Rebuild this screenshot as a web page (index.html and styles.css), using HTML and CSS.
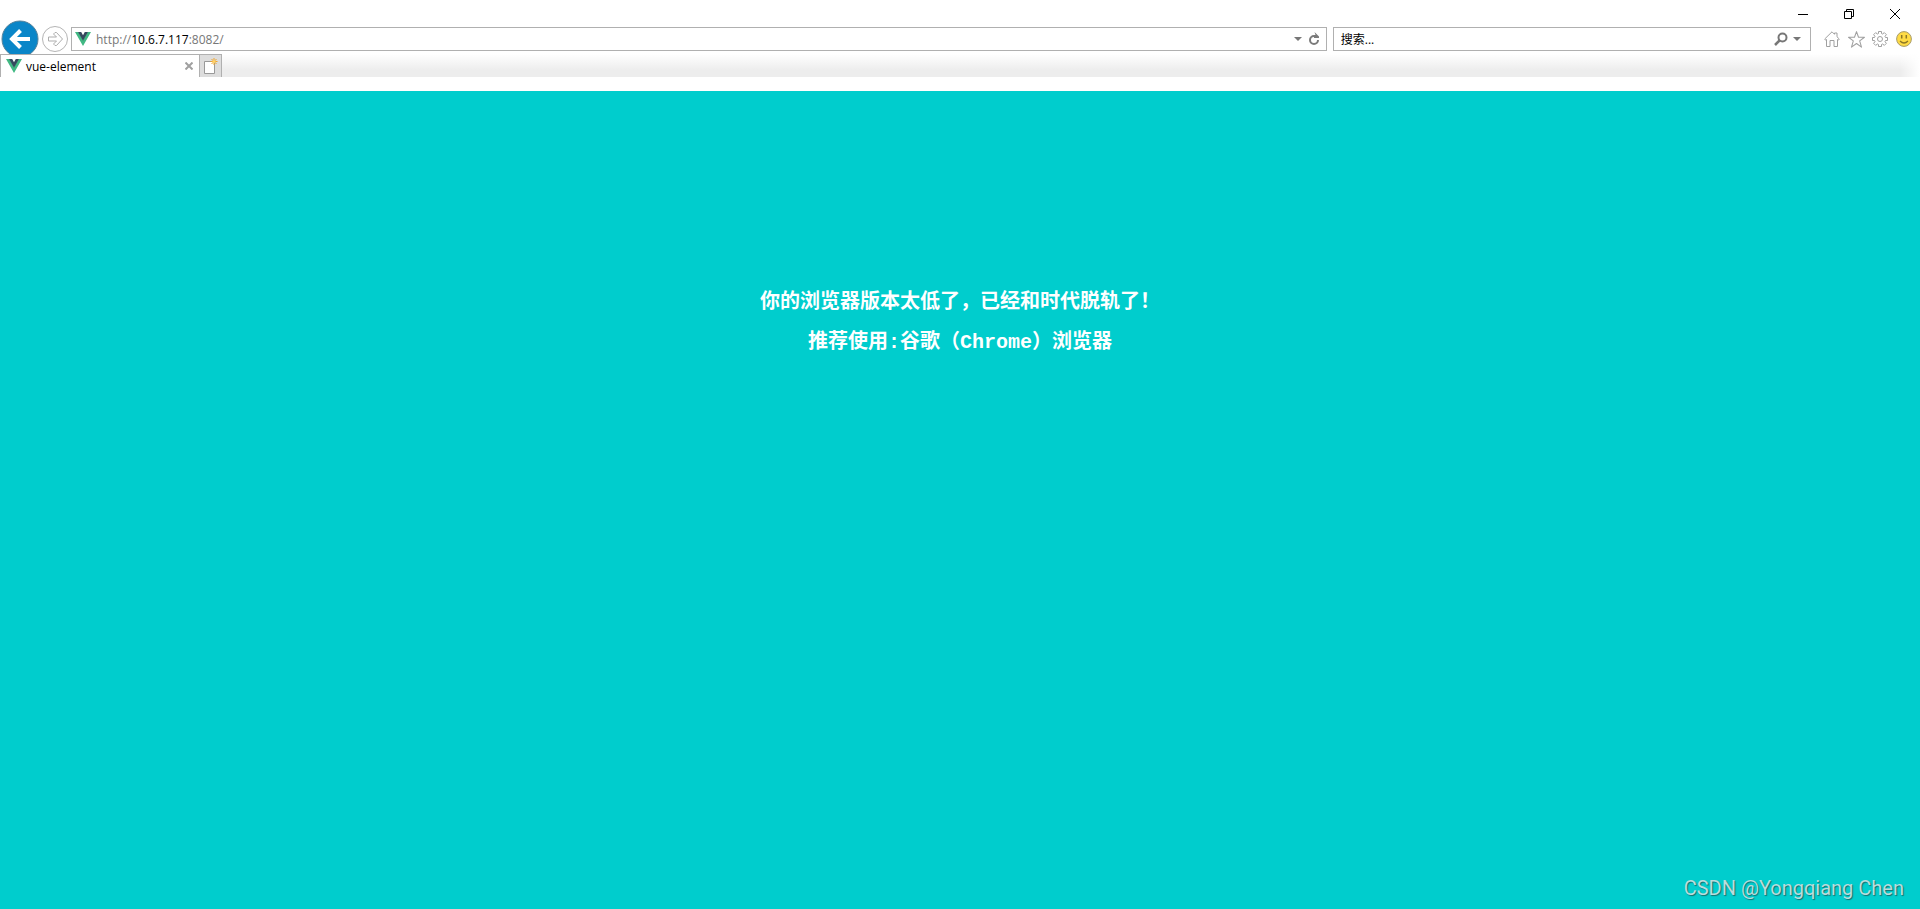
FILE: index.html
```html
<!DOCTYPE html>
<html lang="zh-CN">
<head>
<meta charset="utf-8">
<title>vue-element</title>
<link rel="stylesheet" href="styles.css">
</head>
<body>
<svg class="defs" aria-hidden="true">
  <symbol id="vue" viewBox="0 0 16 14">
    <path d="M0 0h3.4L8 8l4.600-8H16L8 14z" fill="#41b883"/>
    <path d="M3 0h3.200L8 3.200 9.800 0H13L8 8.800z" fill="#35495e"/>
  </symbol>
</svg>
<header class="browser">
  <div class="titlebar">
    <button class="win-btn" aria-label="最小化"><svg width="12" height="12" viewBox="0 0 12 12"><path d="M1 6.500h10" class="win-line"/></svg></button>
    <button class="win-btn" aria-label="还原"><svg width="12" height="12" viewBox="0 0 12 12"><path d="M1.500 3.500h7v7h-7zM3.500 3V1.500h7v7H9" class="win-line"/></svg></button>
    <button class="win-btn" aria-label="关闭"><svg width="12" height="12" viewBox="0 0 12 12"><path d="M1 1l10 10M11 1L1 11" class="win-line"/></svg></button>
  </div>
  <div class="navbar">
    <button class="back" aria-label="后退"><svg width="38" height="38" viewBox="0 0 38 38"><circle cx="19" cy="19" r="18" fill="#0a86c8" stroke="#56839b"/><path d="M29 19H12M19.500 10.500L11 19l8.500 8.500" fill="none" stroke="#fff" stroke-width="4"/></svg></button>
    <button class="forward" aria-label="前进"><svg width="26" height="26" viewBox="0 0 26 26"><circle cx="13" cy="13" r="12.500" fill="#fff" stroke="#b4b4b4"/><path d="M6.500 11h8L11.500 8l1.500-1.500h1.500L20.500 13l-6 6.500H13L11.500 18l3-3h-8z" fill="none" stroke="#adadad" stroke-linejoin="round"/></svg></button>
    <div class="field address">
      <svg width="16" height="14"><use href="#vue"/></svg>
      <div class="url" role="textbox" contenteditable="true" spellcheck="false" aria-label="地址">http://<span class="host">10.6.7.117</span>:8082/</div>
      <button class="small-btn" aria-label="显示地址列表"><svg width="8" height="4" viewBox="0 0 8 4"><path d="M0 0h8L4 4z" fill="#777"/></svg></button>
      <button class="small-btn" aria-label="刷新"><svg width="12" height="14" viewBox="0 0 12 14"><path d="M9 4H6A4 4 0 1 0 10 8" fill="none" stroke="#7b7b7b" stroke-width="2"/><path d="M6.500 0L11 4.500V6H6V4.500h2z" fill="#7b7b7b"/></svg></button>
    </div>
    <div class="field search">
      <input class="search-input" type="text" placeholder="搜索..." aria-label="搜索">
      <button class="small-btn" aria-label="搜索"><svg width="14" height="14" viewBox="0 0 14 14"><circle cx="8.500" cy="5.500" r="4" fill="none" stroke="#777" stroke-width="2"/><path d="M5.500 8.500L1 13" stroke="#777" stroke-width="2.500"/></svg></button>
      <button class="small-btn" aria-label="搜索选项"><svg width="8" height="4" viewBox="0 0 8 4"><path d="M0 0h8L4 4z" fill="#777"/></svg></button>
    </div>
    <div class="tools">
      <button class="tool" aria-label="主页"><svg width="16" height="16" viewBox="0 0 16 16"><path d="M.7 8L8 .8l2.500 2.500V2h2.500v3.800L15.300 8l-1 1.200L13.500 8.500v7h-3.500V9.500H6v6H2.500v-7l-.8.700z" class="tool-line"/></svg></button>
      <button class="tool" aria-label="收藏夹"><svg width="17" height="17" viewBox="0 0 16 16"><path d="M8 .6l1.900 5.300h5.600L11 9.300l1.700 5.900L8 11.800l-4.700 3.400L5 9.300.5 5.900h5.600z" class="tool-line"/></svg></button>
      <button class="tool" aria-label="工具"><svg width="16" height="16" viewBox="0 0 16 16"><path d="M6.500.5h3v2l1.200.500L12.300 1.600l2.100 2.100L13 5.300l.5 1.200h2v3h-2L13 10.700l1.400 1.600-2.100 2.100-1.600-1.400-1.200.5v2h-3v-2L5.300 13l-1.600 1.400-2.100-2.100L3 10.700 2.500 9.500h-2v-3h2L3 5.300 1.600 3.700l2.100-2.100L5.300 3l1.200-.5z" class="tool-line"/><circle cx="8" cy="8" r="2.500" class="tool-line"/></svg></button>
      <button class="tool" aria-label="反馈"><svg width="16" height="16" viewBox="0 0 16 16"><circle cx="8" cy="8" r="7.400" fill="#ffdb45" stroke="#a89c6c"/><path d="M5.700 4v3.500M10.300 4v3.500" stroke="#8c7726" stroke-width="1.500"/><path d="M4 10q4 4 8 0" fill="none" stroke="#8c7726" stroke-width="1.200"/></svg></button>
    </div>
  </div>
  <div class="tabs">
    <div class="tab">
      <svg width="16" height="14"><use href="#vue"/></svg>
      <span class="tab-title">vue-element</span>
      <button class="small-btn" aria-label="关闭选项卡"><svg width="8" height="8" viewBox="0 0 8 8"><path d="M.5.5l7 7M7.500.5l-7 7" stroke="#a0a0a0" stroke-width="2"/></svg></button>
    </div>
    <button class="new-tab" aria-label="新建选项卡"><svg width="16" height="17" viewBox="0 0 16 17"><path d="M1.500 3.500h10v12h-10z" fill="#fff" stroke="#999"/><path d="M11 0v7M7.500 3.500h7M8.500 1l5 5M13.500 1l-5 5" stroke="#f0a52c"/><circle cx="11" cy="3.500" r="1.500" fill="#ffd36a"/></svg></button>
  </div>
</header>
<main class="page">
  <p class="message">你的浏览器版本太低了，已经和时代脱轨了！</p>
  <p class="message">推荐使用:谷歌（Chrome）浏览器</p>
  <div class="watermark">CSDN @Yongqiang Chen</div>
</main>
</body>
</html>
```
FILE: styles.css
```css
* { box-sizing: border-box; }
body {
  margin: 0;
  min-height: 100vh;
  display: flex;
  flex-direction: column;
  background: #fff;
  font: 12px "Open Sans", "Noto Sans CJK SC", sans-serif;
  color: #000;
}
button {
  display: flex;
  align-items: center;
  justify-content: center;
  padding: 0;
  border: 0;
  background: none;
}
svg { flex: none; }
.defs { position: absolute; width: 0; height: 0; }
.browser { padding-bottom: 14px; }
.titlebar {
  display: flex;
  justify-content: flex-end;
  height: 27px;
  padding-right: 2px;
}
.win-btn { width: 46px; height: 27px; }
.win-line { fill: none; stroke: #000; stroke-width: 1; }
.navbar {
  display: flex;
  align-items: center;
  height: 27px;
  padding: 0 8px 3px 1px;
}
.back { width: 38px; }
.forward { width: 26px; margin: 0 3px; }
.field {
  display: flex;
  align-items: center;
  height: 24px;
  border: 1px solid #b0b0b0;
  background: #fff;
}
.address { flex: 1246; padding: 0 4px 0 3px; }
.url {
  flex: 1;
  padding: 1px 0 0 5px;
  line-height: 20px;
  color: #777;
  outline: 0;
}
.host { color: #000; }
.small-btn { width: 16px; height: 20px; }
.search { flex: 464; margin: 0 13px 0 6px; padding: 0 5px 0 7px; }
.search-input {
  flex: 1;
  min-width: 0;
  padding: 0;
  border: 0;
  outline: 0;
  background: none;
  font: inherit;
}
.search-input::placeholder { color: #000; opacity: 1; }
.tools { display: flex; gap: 8px; }
.tool { width: 16px; height: 24px; }
.tool-line { fill: none; stroke: #a0a0a0; stroke-linejoin: round; }
.tabs {
  position: relative;
  display: flex;
  height: 23px;
  background: linear-gradient(#fff, #ededed 70%);
}
.tabs::after {
  content: "";
  position: absolute;
  inset: 0 0 0 auto;
  width: 20px;
  background: linear-gradient(to right, transparent, #fff);
}
.tab {
  display: flex;
  align-items: center;
  width: 200px;
  padding: 0 2px 0 5px;
  border: solid #b0b0b0;
  border-width: 1px 1px 0;
  background: #fff;
}
.tab-title { flex: 1; padding-left: 4px; }
.new-tab {
  width: 22px;
  border: solid #b0b0b0;
  border-width: 1px 1px 0 0;
  background: #ddd;
}
.page {
  position: relative;
  flex: 1;
  padding-top: 192px;
  background: #00cdcd;
  color: #fff;
  text-align: center;
}
.message {
  margin: 0;
  font: bold 20px/40px "Liberation Mono", "Noto Sans CJK SC", monospace;
}
.watermark {
  position: absolute;
  right: 16px;
  bottom: 9px;
  font: 20px/24px Roboto, sans-serif;
  color: #b9dcdc;
  text-shadow: 1px 1px 1px #176e6e;
}
```
